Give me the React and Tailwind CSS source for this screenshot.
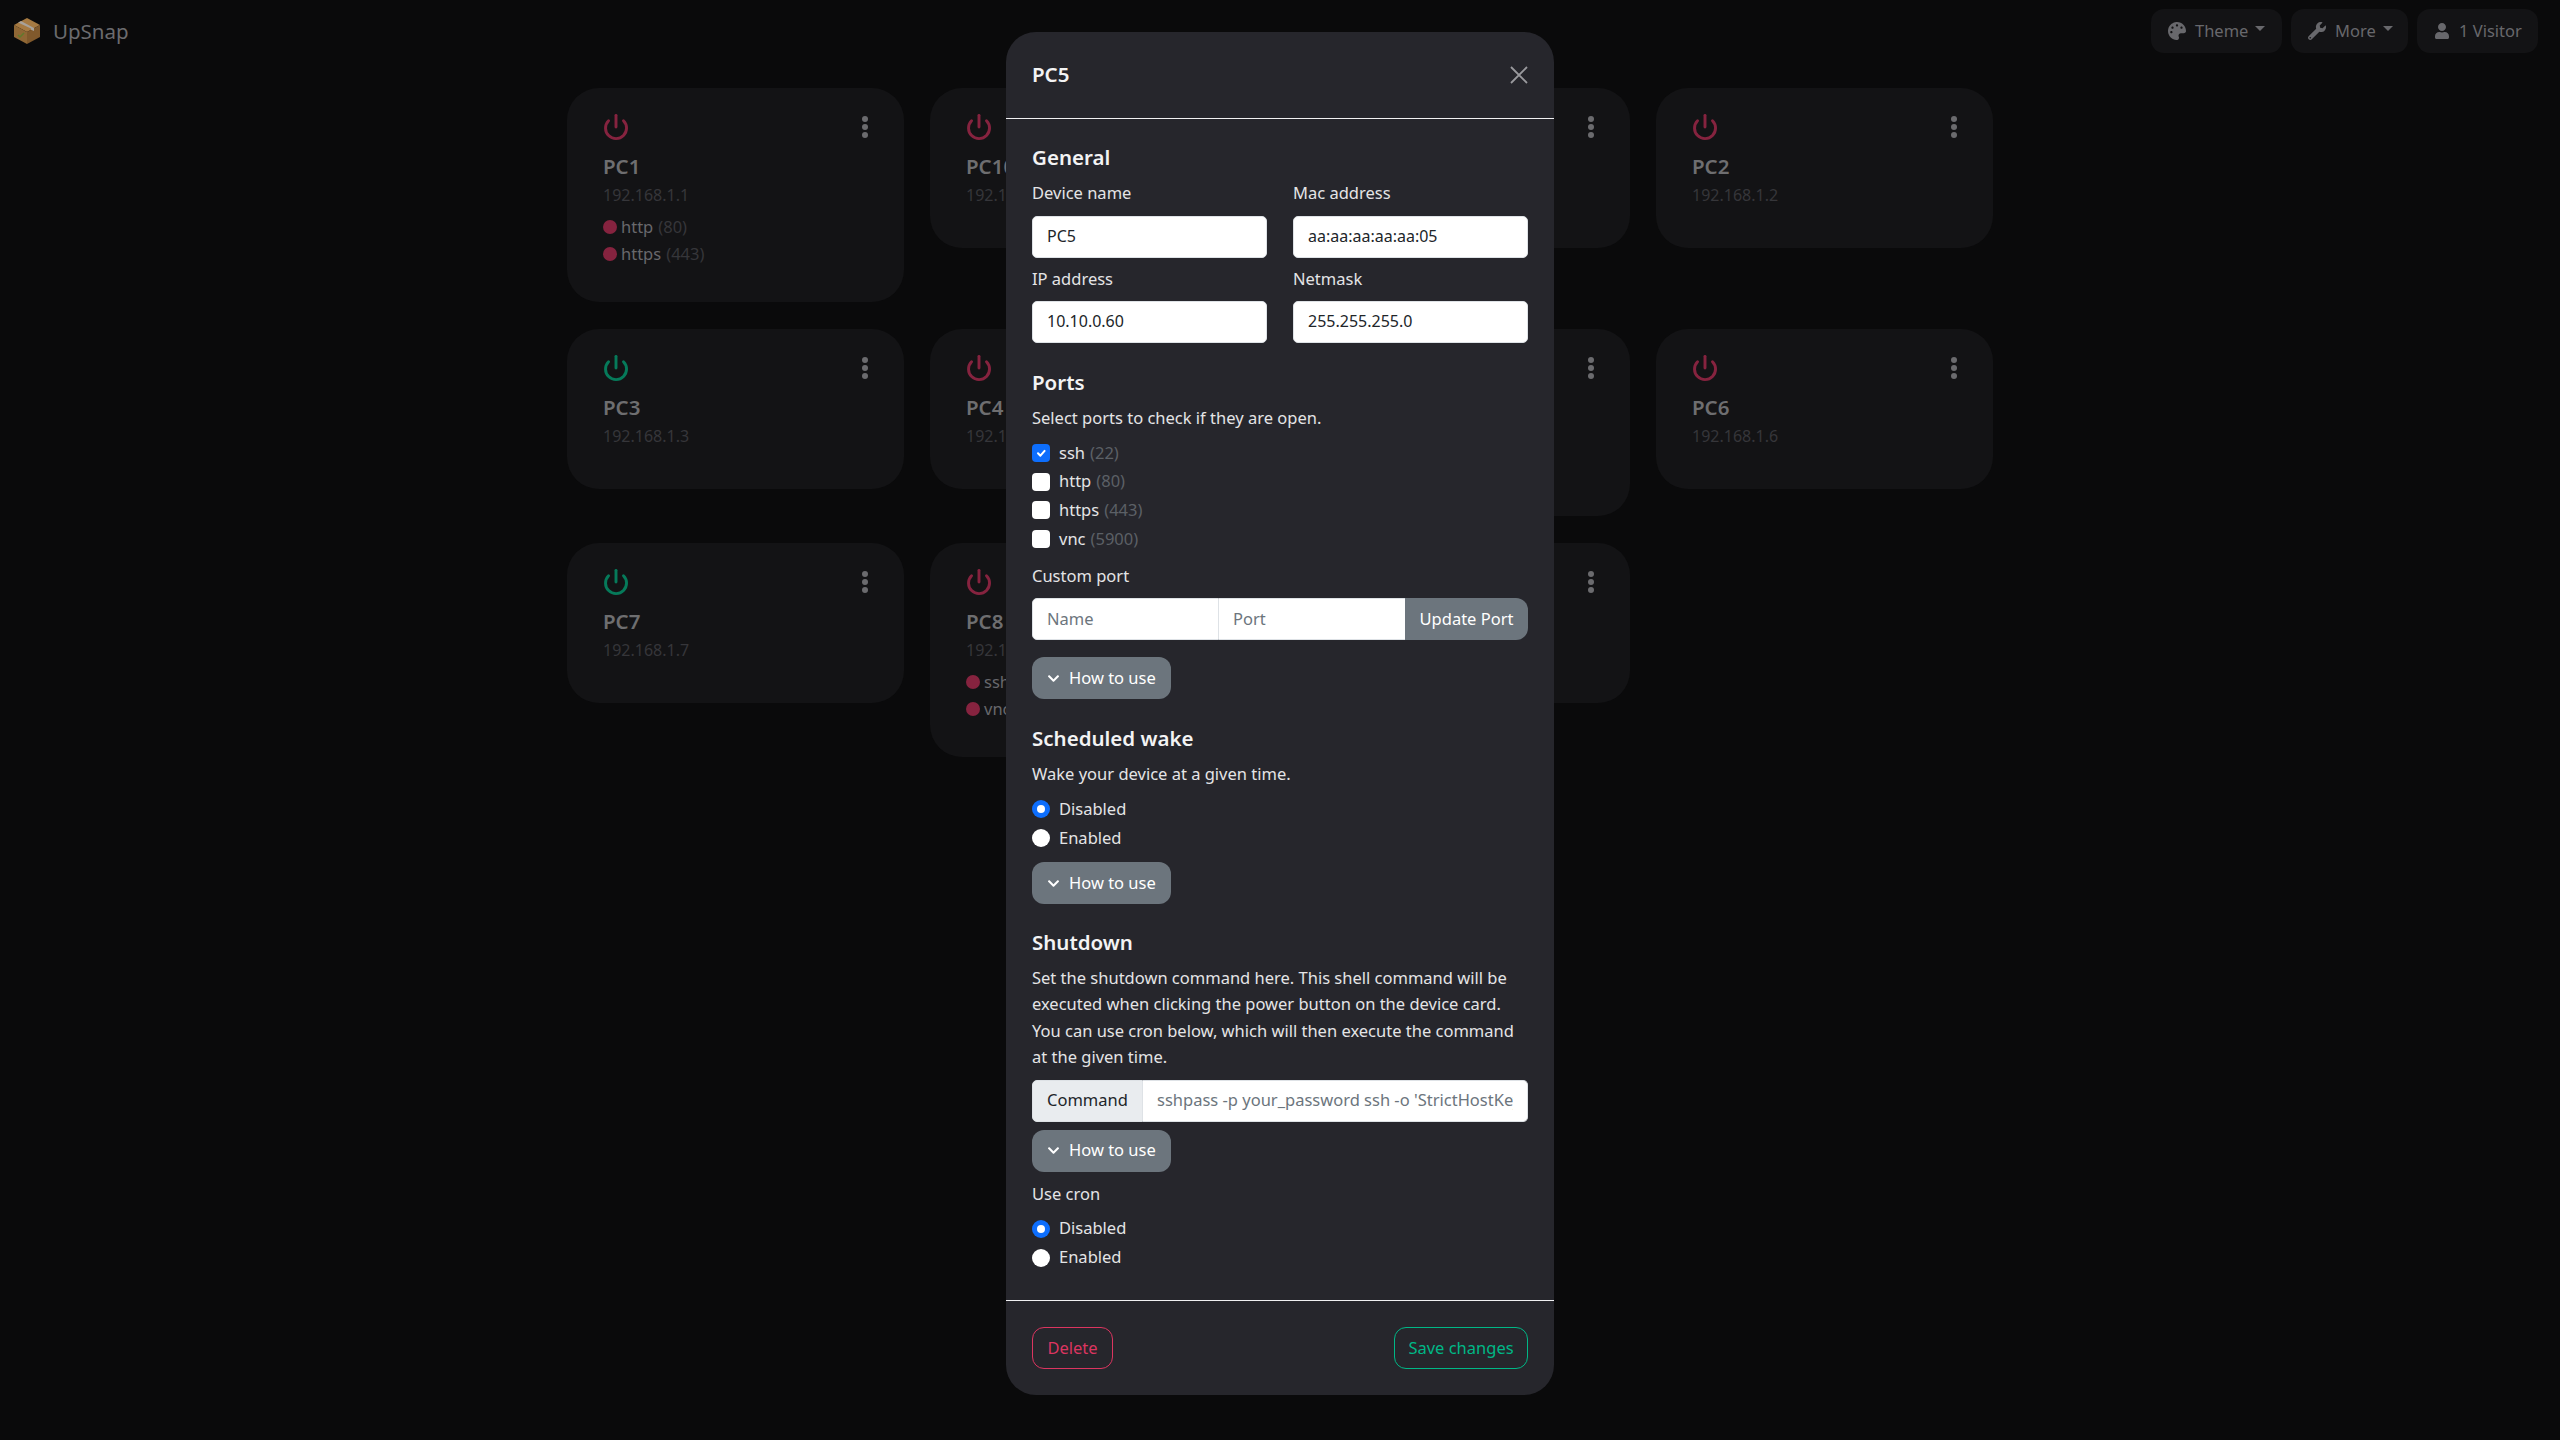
import React from "react";
import { Power } from "lucide-react";
import { FaPalette, FaWrench, FaUser, FaChevronDown } from "react-icons/fa";

const devices = [
  { name: "PC1", ip: "192.168.1.1", on: false, ports: [["http", 80], ["https", 443]] },
  { name: "PC10", ip: "192.168.1.10", on: false, ports: [] },
  { name: "PC11", ip: "192.168.1.11", on: false, ports: [] },
  { name: "PC2", ip: "192.168.1.2", on: false, ports: [] },
  { name: "PC3", ip: "192.168.1.3", on: true, ports: [] },
  { name: "PC4", ip: "192.168.1.4", on: false, ports: [] },
  { name: "PC5", ip: "192.168.1.5", on: false, ports: [["ssh", 22]] },
  { name: "PC6", ip: "192.168.1.6", on: false, ports: [] },
  { name: "PC7", ip: "192.168.1.7", on: true, ports: [] },
  { name: "PC8", ip: "192.168.1.8", on: false, ports: [["ssh", 22], ["vnc", 5900]] },
  { name: "PC9", ip: "192.168.1.9", on: false, ports: [] },
];

const Logo = () => (
  <svg width="28" height="28" viewBox="0 0 28 28">
    <path d="M14 1 L27 8 L14 15 L1 8 Z" fill="#a67a42" />
    <path d="M1 8 L14 15 L14 27 L1 20 Z" fill="#8f6735" />
    <path d="M27 8 L14 15 L14 27 L27 20 Z" fill="#80592c" />
    <path d="M8 4 L21 11 L21 14 L18 12.8 L18 11.5 L5 5.5 Z" fill="#a8a29a" />
    <path d="M5 18 L7 20 L11 16" stroke="#5f7a2c" strokeWidth="1.5" fill="none" />
  </svg>
);

const Kebab = () => (
  <svg width="8" height="24" viewBox="0 0 8 24" fill="#6b6b6e">
    <circle cx="4" cy="4" r="3" />
    <circle cx="4" cy="12" r="3" />
    <circle cx="4" cy="20" r="3" />
  </svg>
);

const NavButton = ({ icon, label, caret, className }) => (
  <div className={`flex items-center h-[44px] pl-[17px] rounded-[13px] bg-[#131315] text-[#68686c] text-[16.5px] ${className}`}>
    {icon}
    <span className="ml-[9px]">{label}</span>
    {caret && <span className="ml-[7px] -mt-[5px] border-x-[5px] border-t-[5px] border-x-transparent border-t-[#68686c]" />}
  </div>
);

const DeviceCard = ({ device }) => (
  <div className="rounded-[32px] bg-[#131315] pt-[25px] pb-[35px] px-[36px]">
    <div className="flex items-center justify-between h-[28px] -mr-[1px]">
      <Power size={28} strokeWidth={2.5} className={`-ml-[1px] ${device.on ? "text-[#067a5a]" : "text-[#86233f]"}`} />
      <Kebab />
    </div>
    <div className="mt-[12px] h-[28px] leading-[26px] text-[20.5px] font-semibold text-[#6e6e70]">{device.name}</div>
    <div className="mt-[1px] pb-[5px] leading-[26px] text-[16px] text-[#36363a]">{device.ip}</div>
    {device.ports.length > 0 && (
      <div className="pt-[1px] flex flex-col gap-[1px]">
        {device.ports.map(([name, number]) => (
          <div key={name} className="flex items-center h-[26px] text-[16.5px]">
            <span className="w-[14px] h-[14px] rounded-full bg-[#86233f] mr-[4px]" />
            <span className="text-[#68686c]">{name}</span>
            <span className="ml-[5px] text-[#36363a]">({number})</span>
          </div>
        ))}
      </div>
    )}
  </div>
);

const Heading = ({ className, children }) => (
  <h3 className={`h-[28px] leading-[26px] text-[20.5px] font-semibold text-[#f3f3f4] ${className}`}>{children}</h3>
);

const Label = ({ className = "", children }) => (
  <div className={`h-[26px] leading-[26px] text-[16.5px] text-[#e4e4e6] ${className}`}>{children}</div>
);

const Field = ({ value, className = "" }) => (
  <input
    readOnly
    defaultValue={value}
    className={`w-full h-[42px] px-[14px] pb-[2px] bg-white border border-[#dee2e6] rounded-[5px] text-[16px] text-[#212529] outline-none ${className}`}
  />
);

const CheckRow = ({ label, number, checked }) => (
  <div className="flex items-center h-[26px]">
    <span className={`flex items-center justify-center w-[18px] h-[18px] rounded-[4px] ${checked ? "bg-[#0d6efd]" : "bg-white"}`}>
      {checked && (
        <svg width="12" height="12" viewBox="0 0 20 20" fill="none" stroke="#fff" strokeWidth="3.4" strokeLinecap="round" strokeLinejoin="round">
          <path d="M5 10.5 L9 14.5 L16 6.5" />
        </svg>
      )}
    </span>
    <span className="ml-[9px] text-[16.5px] text-[#e4e4e6]">{label}</span>
    <span className="ml-[5px] text-[16.5px] text-[#5c6066]">({number})</span>
  </div>
);

const RadioRow = ({ label, checked }) => (
  <div className="flex items-center h-[26px]">
    <span className={`flex items-center justify-center w-[18px] h-[18px] rounded-full ${checked ? "bg-[#0d6efd]" : "bg-white"}`}>
      {checked && <span className="w-[8px] h-[8px] rounded-full bg-white" />}
    </span>
    <span className="ml-[9px] text-[16.5px] text-[#e4e4e6]">{label}</span>
  </div>
);

const HowToUse = ({ className }) => (
  <button className={`flex items-center w-[139px] h-[42px] px-[15px] rounded-[12px] bg-[#6c757d] text-[16.5px] text-white ${className}`}>
    <FaChevronDown size={13} />
    <span className="ml-[9px] whitespace-nowrap">How to use</span>
  </button>
);

export default function App() {
  return (
    <div className="relative h-screen overflow-hidden bg-[#0a0a0b] font-['Noto_Sans',sans-serif]">
      {/* Navbar */}
      <div className="flex items-center justify-between h-[62px] pl-[13px] pr-[22px]">
        <div className="flex items-center">
          <Logo />
          <span className="ml-[12px] text-[20.5px] text-[#6b6b6e]">UpSnap</span>
        </div>
        <div className="flex items-center gap-[9px]">
          <NavButton icon={<FaPalette size={18} />} label="Theme" caret className="w-[131px]" />
          <NavButton icon={<FaWrench size={18} />} label="More" caret className="w-[117px]" />
          <NavButton icon={<FaUser size={16} />} label="1 Visitor" className="w-[121px]" />
        </div>
      </div>

      {/* Device grid */}
      <div className="w-[1426px] mx-auto mt-[26px] grid grid-cols-4 gap-x-[26px] gap-y-[27px] items-start">
        {devices.map((d) => (
          <DeviceCard key={d.name} device={d} />
        ))}
      </div>

      {/* Modal */}
      <div className="absolute inset-0 flex justify-center pt-[32px]">
        <div className="w-[548px] h-[1363px] rounded-[30px] bg-[#26262c] flex flex-col">
          <div className="flex items-center justify-between h-[84px] pb-[2px] px-[26px] border-b border-[#f1f1f3] box-content">
            <span className="text-[20.5px] font-semibold text-[#f3f3f4]">PC5</span>
            <svg width="18" height="18" viewBox="0 0 18 18" stroke="#9a9a9e" strokeWidth="1.8" className="mt-[2px]">
              <path d="M1 1 L17 17 M17 1 L1 17" />
            </svg>
          </div>

          <div className="px-[26px] pt-[25px] flex-1">
            <Heading>General</Heading>
            <div className="grid grid-cols-2 gap-x-[26px]">
              <div>
                <Label className="mt-[8px]">Device name</Label>
                <Field value="PC5" className="mt-[10px]" />
                <Label className="mt-[8px]">IP address</Label>
                <Field value="10.10.0.60" className="mt-[9px]" />
              </div>
              <div>
                <Label className="mt-[8px]">Mac address</Label>
                <Field value="aa:aa:aa:aa:aa:05" className="mt-[10px]" />
                <Label className="mt-[8px]">Netmask</Label>
                <Field value="255.255.255.0" className="mt-[9px]" />
              </div>
            </div>

            <Heading className="mt-[26px]">Ports</Heading>
            <Label className="mt-[8px]">Select ports to check if they are open.</Label>
            <div className="mt-[9px] flex flex-col gap-[2.7px]">
              <CheckRow label="ssh" number={22} checked />
              <CheckRow label="http" number={80} />
              <CheckRow label="https" number={443} />
              <CheckRow label="vnc" number={5900} />
            </div>
            <Label className="mt-[11px]">Custom port</Label>
            <div className="mt-[9px] flex h-[42px]">
              <input
                readOnly
                placeholder="Name"
                className="w-[187px] px-[14px] bg-white border border-[#dee2e6] rounded-l-[5px] text-[16.5px] placeholder:text-[#6c757d] outline-none"
              />
              <input
                readOnly
                placeholder="Port"
                className="w-[186px] px-[14px] bg-white border-y border-[#dee2e6] text-[16.5px] placeholder:text-[#6c757d] outline-none"
              />
              <button className="flex-1 rounded-r-[12px] bg-[#6c757d] text-[16.5px] text-white">Update Port</button>
            </div>
            <HowToUse className="mt-[17px]" />

            <Heading className="mt-[26px]">Scheduled wake</Heading>
            <Label className="mt-[8px]">Wake your device at a given time.</Label>
            <div className="mt-[9px] flex flex-col gap-[3px]">
              <RadioRow label="Disabled" checked />
              <RadioRow label="Enabled" />
            </div>
            <HowToUse className="mt-[11px]" />

            <Heading className="mt-[25px]">Shutdown</Heading>
            <p className="mt-[8px] text-[16.5px] leading-[26.4px] text-[#e4e4e6]">
              Set the shutdown command here. This shell command will be executed when clicking the power button on the device card. You can use cron below, which will then execute the command at the given time.
            </p>
            <div className="mt-[9px] flex h-[42px]">
              <span className="flex items-center w-[111px] pl-[14px] pb-[1px] bg-[#e9ecef] border border-[#dee2e6] rounded-l-[5px] text-[16.5px] text-[#212529]">Command</span>
              <input
                readOnly
                placeholder="sshpass -p your_password ssh -o 'StrictHostKeyChecking=no' user@hostname 'sudo poweroff'"
                className="flex-1 min-w-0 px-[14px] pb-[1px] bg-white border-y border-r border-[#dee2e6] rounded-r-[5px] text-[16.5px] placeholder:text-[#6c757d] outline-none"
              />
            </div>
            <HowToUse className="mt-[8px]" />
            <Label className="mt-[9px]">Use cron</Label>
            <div className="mt-[9px] flex flex-col gap-[3px]">
              <RadioRow label="Disabled" checked />
              <RadioRow label="Enabled" />
            </div>
          </div>

          <div className="flex items-center justify-between h-[95px] px-[26px] border-t border-[#f1f1f3]">
            <button className="w-[81px] h-[42px] rounded-[12px] border border-[#dc3560] text-[16.5px] text-[#dc3560]">Delete</button>
            <button className="w-[134px] h-[42px] rounded-[12px] border border-[#00b786] text-[16.5px] text-[#00b786] whitespace-nowrap">Save changes</button>
          </div>
        </div>
      </div>
    </div>
  );
}
